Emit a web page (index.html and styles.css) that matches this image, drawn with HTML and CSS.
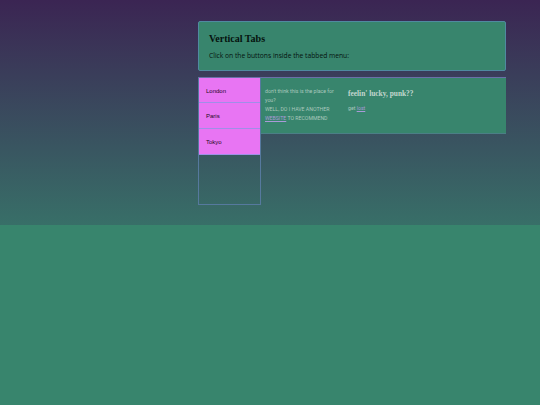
FILE: index.html
```html
<!DOCTYPE html>
<html lang="en">
  <head>
    <meta charset="UTF-8" />
    <title>Vertical Tabs</title>
    <link rel="stylesheet" href="styles.css">
  </head>
  <body>
    <div class="page">

      <div class="intro">
        <h2 class="intro-title">Vertical Tabs</h2>
        <p class="intro-text">Click on the buttons inside the tabbed menu:</p>
      </div>

      <div class="tabs">
        <div class="tab-list">
          <button class="tab-but">London</button>
          <button class="tab-but">Paris</button>
          <button class="tab-but">Tokyo</button>
        </div>

        <div class="tab-content">
          <div class="tab-left">
            <p>don't think this is the place for you?</p>
            <p>WELL, DO I HAVE ANOTHER <a href="#" class="tab-link">WEBSITE</a> TO RECOMMEND</p>
          </div>
          <div class="tab-right">
            <h3 class="lucky">feelin' lucky, punk??</h3>
            <p class="get">get <a href="#" class="tab-link">lost</a></p>
          </div>
        </div>
      </div>

    </div>
  </body>
</html>
```

FILE: styles.css
```css
html{
  background-color: #38856d;
}
body{
  margin: 0;
  height: 225px;
  background: linear-gradient(#3b2553, #386f68);
  font-family: "Open Sans", sans-serif;
}
.page{
  width: 308px;
  margin-left: 198px;
  padding-top: 21px;
}
.intro{
  box-sizing: border-box;
  height: 50px;
  padding: 11px 10px 0;
  background-color: #38856d;
  border: 1px solid #4f8aa0;
  border-radius: 2px;
}
.intro-title{
  margin: 0;
  font-family: "Liberation Serif", serif;
  font-size: 10px;
  line-height: 12px;
  color: #05120e;
}
.intro-text{
  margin: 6px 0 0;
  font-size: 6.7px;
  line-height: 10px;
  color: #05120e;
}
.tabs{
  display: flex;
  align-items: flex-start;
  margin-top: 6px;
}
.tab-list{
  box-sizing: border-box;
  display: flex;
  flex-direction: column;
  width: 63px;
  height: 128px;
  border: 1px solid #56799e;
  border-top-color: #6a6fa8;
}
.tab-but{
  height: 26px;
  padding: 0 0 0 7px;
  text-align: left;
  background-color: #e875f3;
  border: none;
  border-bottom: 1px solid #a08ee8;
  font-family: "Liberation Sans", sans-serif;
  font-size: 6px;
  color: #1c0a24;
}
.tab-but:first-child{
  height: 25px;
  padding-top: 1px;
}
.tab-content{
  box-sizing: border-box;
  display: flex;
  gap: 11px;
  flex: 1;
  height: 57px;
  padding: 9px 4px 0;
  background-color: #38856d;
  border-top: 1px solid #6a6fa8;
  border-bottom: 1px solid #4b7f86;
  color: #aac8bd;
}
.tab-left{
  width: 72px;
  font-family: Roboto, sans-serif;
  font-size: 5.2px;
  line-height: 9px;
}
.tab-left p{
  margin: 0;
}
.tab-right{
  padding-top: 2px;
}
.lucky{
  margin: 0;
  font-family: "Liberation Serif", serif;
  font-size: 7.4px;
  line-height: 9px;
  color: #c3d6cf;
}
.get{
  margin: 6px 0 0;
  font-family: Roboto, sans-serif;
  font-size: 5.2px;
  line-height: 9px;
}
.tab-link{
  color: #a99ad8;
}
```
